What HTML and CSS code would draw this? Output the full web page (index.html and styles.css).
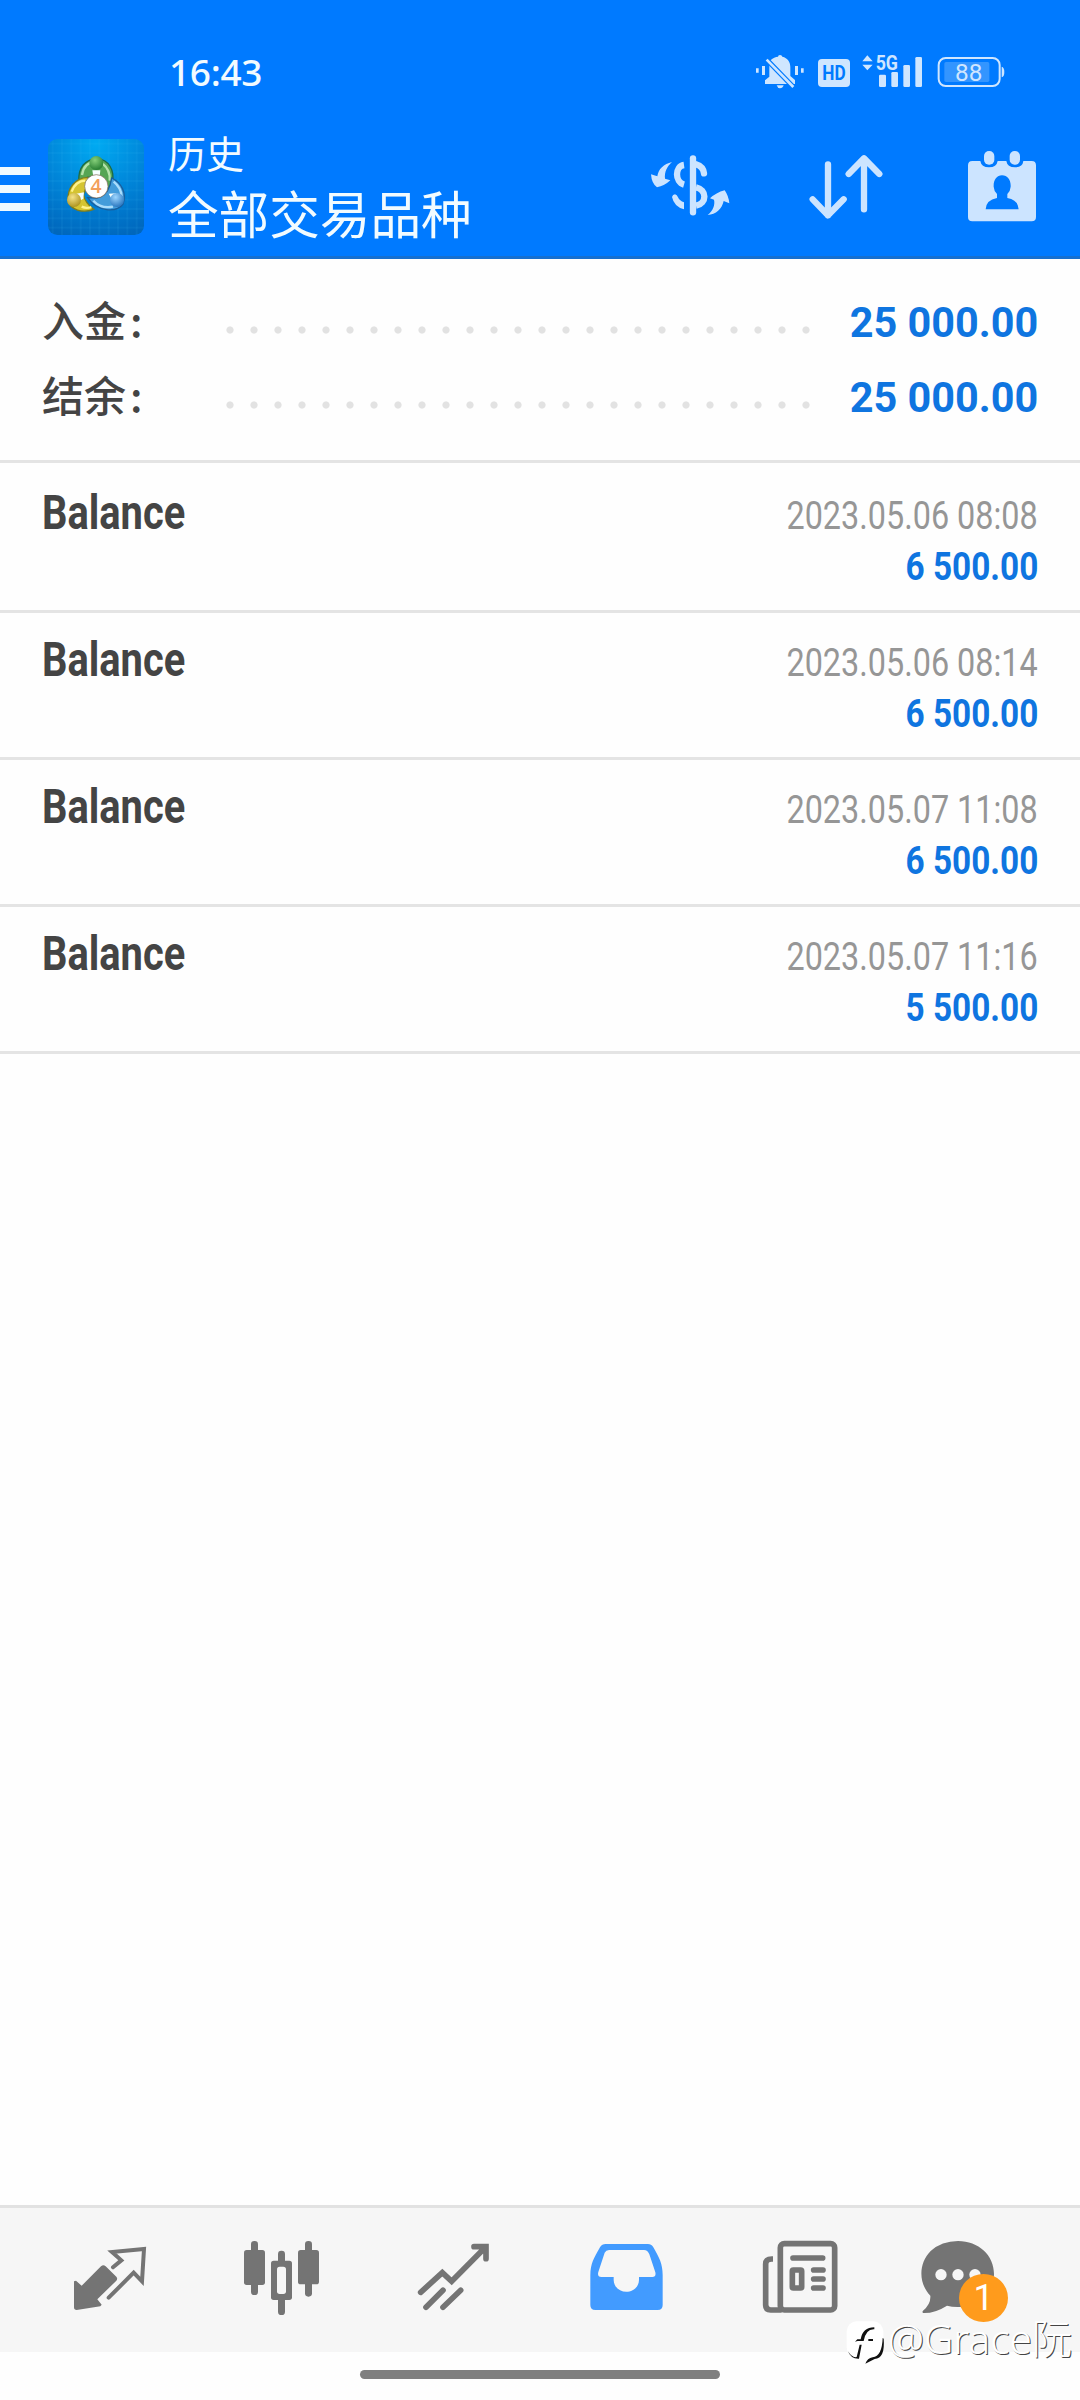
FILE: index.html
```html
<!DOCTYPE html>
<html lang="zh-CN">
<head>
<meta charset="utf-8">
<meta name="viewport" content="width=device-width">
<title>历史</title>
<link rel="stylesheet" href="styles.css">
</head>
<body>
<div class="screen">
  <header class="header">
    <div class="status">
      <span class="clock">16:43</span>
      <div class="status-icons">
        <svg width="52" height="40" viewBox="42 36 156 120" fill="#cfe6ff">
          <path d="M48 85h8v13h-8zM66 78h9v27h-9zM165 78h9v27h-9zM183 85h8v13h-8z"/>
          <path d="M90 62C98 53 108 51 114 50Q114 45 120 45Q126 45 127 50C143 54 151 65 151 82V108L165 120V132H75V121L88 110V82Q88 70 90 62ZM110 136H131Q128 145 120 145Q113 145 110 136Z"/>
          <path d="M74 53L85 64L154 135L166 147" stroke="#007aff" stroke-width="15"/>
          <path d="M80 59L160 141" stroke="#cfe6ff" stroke-width="8"/>
        </svg>
        <svg width="32" height="40" viewBox="234 36 96 120">
          <rect x="234" y="57" width="96" height="84" rx="12" fill="#cfe6ff"/>
          <text x="282" y="121" class="hd" text-anchor="middle" textLength="70" lengthAdjust="spacingAndGlyphs">HD</text>
        </svg>
        <svg width="60" height="40" viewBox="366 36 180 120" fill="#cfe6ff">
          <path d="M367 64L382 46L398 64ZM367 74H398L382 91Z"/>
          <text x="407" y="90" class="net" textLength="67" lengthAdjust="spacingAndGlyphs">5G</text>
          <rect x="417" y="104" width="21" height="37" rx="4"/><rect x="454" y="96" width="20" height="45" rx="4"/><rect x="490" y="75" width="20" height="66" rx="4"/><rect x="526" y="51" width="20" height="90" rx="4"/>
        </svg>
        <svg class="battery" width="68" height="40" viewBox="592 36 204 120">
          <rect x="614" y="66" width="135" height="60" rx="5" fill="#3395ff"/>
          <rect x="597" y="54" width="183" height="84" rx="21" fill="none" stroke="#cfe6ff" stroke-width="6"/>
          <path d="M786 80Q794 82 794 96T786 112Z" fill="#cfe6ff"/>
          <text x="687" y="123" class="batt" text-anchor="middle" textLength="82" lengthAdjust="spacingAndGlyphs">88</text>
        </svg>
      </div>
    </div>
    <div class="appbar">
      <div class="menu"><i></i><i></i><i></i></div>
      <svg class="logo" width="96" height="96" viewBox="144 327 288 288">
        <defs>
          <radialGradient id="bg" cx=".5" cy=".05" r="1"><stop offset="0" stop-color="#00aaf2"/><stop offset=".55" stop-color="#0084d8"/><stop offset="1" stop-color="#0067bd"/></radialGradient>
          <radialGradient id="gr" cx=".4" cy=".3" r=".8"><stop offset="0" stop-color="#86d07a"/><stop offset="1" stop-color="#1c7429"/></radialGradient>
          <radialGradient id="ye" cx=".4" cy=".3" r=".8"><stop offset="0" stop-color="#f5e388"/><stop offset="1" stop-color="#a68a13"/></radialGradient>
          <radialGradient id="bl" cx=".4" cy=".3" r=".8"><stop offset="0" stop-color="#9dd6ff"/><stop offset="1" stop-color="#1d6bb8"/></radialGradient>
          <pattern id="grid" width="28" height="28" patternUnits="userSpaceOnUse" x="144" y="327"><path d="M0 14H28M14 0V28" stroke="#3fc3f0" stroke-opacity=".22" stroke-width="2"/></pattern>
        </defs>
        <rect x="144" y="327" width="288" height="288" rx="28" fill="url(#bg)"/>
        <rect x="144" y="327" width="288" height="288" rx="28" fill="url(#grid)"/>
        <path d="M237 455C233 412 257 388 290 386C326 388 345 420 337 460Q330 485 313 493L288 440L262 442Z" fill="#55a554" stroke="#1d6a45" stroke-width="4"/>
        <path d="M246 435Q252 397 283 397M307 400Q332 420 329 452" stroke="#b5e2ab" stroke-width="7" fill="none"/>
        <path d="M262 442C225 444 202 475 204 510C210 540 248 551 281 538Q256 520 250 494L268 450Z" fill="#d5c431" stroke="#7e7d1c" stroke-width="4"/>
        <path d="M215 485Q227 453 256 452M245 530Q259 537 274 531" stroke="#fff28b" stroke-width="7" fill="none"/>
        <path d="M335 444C365 458 381 491 369 522C350 548 292 547 263 503L290 504Q318 500 330 466Z" fill="#439cda" stroke="#195e9c" stroke-width="4"/>
        <path d="M341 455Q363 473 365 499M280 512Q303 537 339 530" stroke="#a9dcfb" stroke-width="7" fill="none"/>
        <path d="M277 421H301L299 440H280ZM229 491L252 487L250 506L239 512ZM326 491L349 490L337 511Z" fill="#f7ffff"/>
        <circle cx="289" cy="399" r="21" fill="url(#gr)"/><circle cx="222" cy="510" r="21" fill="url(#ye)"/><circle cx="351" cy="510" r="21" fill="url(#bl)"/>
        <circle cx="289" cy="469" r="35" fill="#fff" stroke="#73604b" stroke-width="2"/>
        <text x="288" y="490" class="four" text-anchor="middle">4</text>
      </svg>
      <div class="titles">
        <span class="subtitle">历史</span>
        <span class="title">全部交易品种</span>
      </div>
      <div class="actions">
        <svg width="90" height="80" viewBox="45 50 270 240" fill="none" stroke="#cce4ff" stroke-width="19" stroke-linecap="round">
          <path d="M189 84V246"/>
          <path d="M162 104C134 108 134 155 162 163" stroke-linecap="butt"/>
          <path d="M198 102Q220 109 222 129"/>
          <path d="M126 200Q128 192 135 192Q141 193 144 201Q149 212 162 216V237Q132 229 126 200Z" fill="#cce4ff" stroke="none"/>
          <path d="M198 171C231 178 232 219 198 226" stroke-linecap="butt"/>
          <path d="M126 95C101 101 85 116 82 138L63 132Q65 160 81 171Q103 167 121 150L105 145C103 125 111 108 126 95ZM233 254C248 242 256 224 252 208L240 204Q258 187 284 180Q296 197 298 219L281 212C276 236 258 252 233 254Z" fill="#cce4ff" stroke="none"/>
        </svg>
        <svg class="sort" width="80" height="80" viewBox="528 50 240 240" fill="none" stroke="#cce4ff" stroke-width="19" stroke-linecap="round" stroke-linejoin="round">
          <path d="M594 102V255M548 207L594 255L641 207M702 237V84M656 131L702 84L748 131"/>
        </svg>
        <svg class="calendar" width="74" height="80" viewBox="1005 50 222 240" fill="#cce4ff">
          <path d="M1027 92H1051Q1054 111 1077 111T1103 92H1129Q1132 111 1155 111T1180 92H1205Q1218 92 1218 105V260Q1218 273 1205 273H1027Q1014 273 1014 260V105Q1014 92 1027 92Z"/>
          <rect x="1062" y="62" width="31" height="41" rx="15"/><rect x="1139" y="62" width="31" height="41" rx="15"/>
          <path d="M1116 135C1133 135 1143 150 1142 169Q1141 183 1132 191V203Q1165 209 1166 237H1067Q1068 209 1101 203V191Q1092 183 1091 169C1090 150 1100 135 1116 135Z" fill="#007aff"/>
        </svg>
      </div>
    </div>
  </header>
  <section class="summary">
    <div class="sum-row"><span class="label">入金<span class="colon">:</span></span><span class="dots"></span><span class="total">25 000.00</span></div>
    <div class="sum-row"><span class="label">结余<span class="colon">:</span></span><span class="dots"></span><span class="total">25 000.00</span></div>
  </section>
  <main class="list">
    <article class="deal"><span class="name">Balance</span><div class="info"><span class="date">2023.05.06 08:08</span><span class="amount">6 500.00</span></div></article>
    <article class="deal"><span class="name">Balance</span><div class="info"><span class="date">2023.05.06 08:14</span><span class="amount">6 500.00</span></div></article>
    <article class="deal"><span class="name">Balance</span><div class="info"><span class="date">2023.05.07 11:08</span><span class="amount">6 500.00</span></div></article>
    <article class="deal"><span class="name">Balance</span><div class="info"><span class="date">2023.05.07 11:16</span><span class="amount">5 500.00</span></div></article>
  </main>
  <nav class="nav">
    <svg viewBox="90 120 300 300" fill="#747474">
      <path d="M138 272L155 287L213 229Q220 222 227 229L259 260Q264 266 259 272L202 328L215 344L211 349L140 360Q132 360 132 352V274Z"/>
      <path d="M249 232L274 211L246 186L342 177L336 274L311 248L236 323" fill="none" stroke="#747474" stroke-width="12" stroke-linecap="round"/>
    </svg>
    <svg viewBox="606 120 300 300" fill="#747474">
      <rect x="663" y="153" width="21" height="162" rx="10"/><rect x="642" y="180" width="63" height="105" rx="8"/>
      <rect x="825" y="153" width="21" height="167" rx="10"/><rect x="804" y="180" width="63" height="103" rx="8"/>
      <rect x="744" y="182" width="21" height="193" rx="10"/><rect x="723" y="212" width="63" height="118" rx="8"/><rect x="741" y="230" width="27" height="82" rx="8" fill="#f6f6f6"/>
    </svg>
    <svg viewBox="1122 120 300 300" fill="none" stroke="#747474" stroke-width="17" stroke-linecap="round">
      <path d="M1172 307L1237 248L1265 274L1364 174M1332 170H1368V206M1188 352L1239 301M1239 352L1292 301"/>
    </svg>
    <svg viewBox="48 120 300 300">
      <path fill="#429bff" fill-rule="evenodd" d="M137 162H264Q274 162 280 172C298 203 308 222 308 255V345Q308 360 293 360H106Q91 360 91 345V255C91 222 102 203 120 172Q126 162 137 162ZM147 180Q138 180 134 188L115 246Q111 261 124 261H161V270C163 317 235 317 237 270V261H277Q289 261 286 247L268 193Q263 180 252 180Z"/>
    </svg>
    <svg viewBox="564 120 300 300" fill="none" stroke="#747474" stroke-width="17">
      <rect x="661" y="161" width="163" height="199" rx="12"/>
      <path d="M639 207H635Q617 207 617 222V345Q617 360 632 360H665"/>
      <path d="M699 204H788M761 240H789M761 267H789M761 294H789" stroke-linecap="round"/>
      <rect x="697" y="240" width="28" height="54" rx="3"/>
    </svg>
    <div class="chat">
      <svg viewBox="1080 120 300 300">
        <path fill="#747474" d="M1194 153C1256 153 1302 196 1302 252C1302 310 1256 351 1200 351Q1178 352 1161 347Q1125 370 1090 369Q1085 367 1089 362Q1113 342 1111 317C1075 280 1075 220 1112 183Q1145 153 1194 153Z"/>
        <g fill="#f6f6f6"><circle cx="1143" cy="254" r="17"/><circle cx="1194" cy="254" r="17"/><circle cx="1245" cy="254" r="17"/></g>
      </svg>
      <span class="badge">1</span>
    </div>
  </nav>
  <footer class="gesture"><i></i></footer>
  <div class="watermark">
    <svg width="42" height="46" viewBox="855 392 126 138">
      <rect x="860" y="396" width="110" height="108" rx="30" fill="#fff"/>
      <path d="M971 448Q976 506 944 509L916 523Q922 507 938 504Q966 501 968 446ZM864 486Q876 506 890 503L899 466H905L897 508Q872 509 864 486ZM885 457L892 450H902Q908 414 943 414V420Q918 418 911 455H893ZM925 449H939V455H925Z" fill="#111"/>
    </svg>
    <span>@Grace阮</span>
  </div>
</div>
</body>
</html>
```
FILE: styles.css
```css
* { box-sizing: border-box; }
body { margin: 0; background: #fff; }
.screen {
  position: relative;
  display: flex;
  flex-direction: column;
  width: 1080px;
  height: 2400px;
  overflow: hidden;
  background: #fefefe;
  font-family: Roboto, "Noto Sans CJK SC", sans-serif;
}
svg { display: block; flex: none; }

.header { height: 259px; background: #007aff; border-bottom: 3px solid #1670d0; color: #f2fbff; }
.status { display: flex; justify-content: space-between; height: 130px; padding: 52px 75px 0 169px; }
.clock { margin-top: -1px; font: 500 37px/42px "Noto Sans", sans-serif; letter-spacing: -0.3px; }
.status-icons { display: flex; gap: 12px; }
.battery { margin-left: 3px; }
.hd { font: 700 62px Roboto, sans-serif; fill: #007aff; }
.net { font: 700 60px Roboto, sans-serif; }
.batt { font: 400 73px Roboto, sans-serif; fill: #cfe6ff; }
.four { font: 600 58px "Open Sans", sans-serif; fill: #f3a05c; }

.appbar { display: flex; height: 126px; }
.menu { display: flex; flex-direction: column; gap: 10px; width: 48px; padding-top: 37px; }
.menu i { width: 30px; height: 8px; background: #f0faff; }
.logo { margin-top: 9px; }
.titles { display: flex; flex-direction: column; padding-left: 24px; font-family: "Noto Sans CJK SC", sans-serif; }
.subtitle { height: 46px; margin-top: -1px; font-size: 38px; line-height: 46px; }
.title { margin-top: 6px; font-size: 50.6px; line-height: 62px; }
.actions { display: flex; margin-left: auto; padding: 17px 41px 0 0; }
.sort { margin-left: 71px; }
.calendar { margin-left: 79px; }

.summary { height: 204px; padding: 26px 42px 0 42px; border-bottom: 3px solid #e4e4e4; }
.sum-row { display: flex; align-items: center; height: 75px; color: #444; }
.label { width: 173px; padding-bottom: 7px; font-weight: 500; font-size: 42px; line-height: 60px; font-family: "Noto Sans CJK SC", sans-serif; }
.colon { padding-left: 4px; }
.dots { width: 600px; height: 24px; margin-top: 14px; background: radial-gradient(circle, #e2e2e2 3.2px, transparent 4px) 3px 0 / 24px 24px; }
.total { margin-left: auto; font-weight: 700; font-size: 42px; color: #0f75e0; transform: scaleX(.985); transform-origin: right; }

.list { flex: 1; padding-top: 3px; }
.deal { display: flex; justify-content: space-between; height: 147px; padding: 19px 42px 0 42px; border-bottom: 3px solid #e4e4e4; }
.name { height: 56px; font-weight: 700; font-size: 48px; line-height: 56px; color: #444; transform: scaleX(.83); transform-origin: left; }
.info { display: flex; flex-direction: column; align-items: flex-end; }
.date { margin-top: 6px; font-size: 39px; line-height: 51px; color: #969696; transform: scaleX(.83); transform-origin: right; }
.amount { font-weight: 700; font-size: 39px; line-height: 51px; color: #0f75e0; transform: scaleX(.855); transform-origin: right; }

.nav { display: grid; grid-template-columns: repeat(6, 172px); justify-items: center; height: 147px; padding: 22px 24px 0; background: #f6f6f6; border-top: 3px solid #e2e2e2; }
.nav svg { width: 100px; height: 100px; }
.chat { position: relative; }
.badge { position: absolute; left: 39px; top: 44px; width: 49px; height: 48px; border-radius: 50%; background: #ff9b1c; color: #fff; font-size: 36px; line-height: 49px; text-align: center; }
.gesture { display: flex; justify-content: center; height: 48px; padding-top: 18px; background: #fefefe; }
.gesture i { width: 360px; height: 9px; border-radius: 5px; background: #7f7f7f; }
.watermark { position: absolute; left: 845px; top: 2320px; display: flex; gap: 1px; color: #fff; }
.watermark span { margin-top: 2px; font: 300 40.5px/34px "Noto Sans", "Noto Sans CJK SC", sans-serif; white-space: nowrap; text-shadow: 1px 1px 0 #444; }
```
